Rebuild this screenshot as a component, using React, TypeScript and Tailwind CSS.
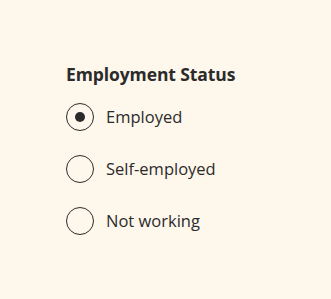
const options = ["Employed", "Self-employed", "Not working"];

export default function App() {
  const selected = "Employed";
  return (
    <div className="min-h-screen w-full bg-[#fef7ec] pt-[62px] pl-[66px] text-[#2b2b2b]" style={{ fontFamily: '"Open Sans", sans-serif' }}>
      <fieldset>
        <legend className="text-[17.5px] font-bold leading-[24px] tracking-[-0.1px]">Employment Status</legend>
        <div className="mt-[17px] flex flex-col gap-[24px]">
          {options.map((o) => (
            <label key={o} className="flex items-center gap-[12px] h-[28px]">
              <span className="w-[28px] h-[28px] rounded-full border border-[#2b2b2b] flex items-center justify-center">
                {o === selected && <span className="w-[10px] h-[10px] rounded-full bg-[#2b2b2b]" />}
              </span>
              <span className="text-[16.5px] leading-[20px]">{o}</span>
            </label>
          ))}
        </div>
      </fieldset>
    </div>
  );
}
